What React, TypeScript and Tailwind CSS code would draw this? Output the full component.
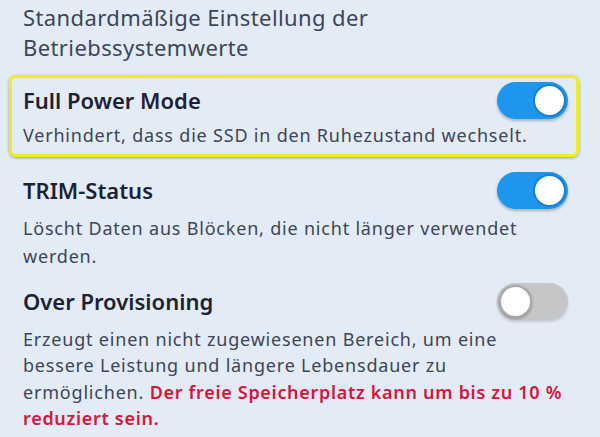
import React from "react";

function Toggle({ on }: { on: boolean }) {
  return on ? (
    <div className="relative w-[71px] h-[37px] rounded-full bg-[#1e96ee] shadow-[0_2px_3px_rgba(0,0,0,0.25)] shrink-0">
      <div className="absolute right-[2px] top-[2px] w-[33px] h-[33px] rounded-full bg-white border-2 border-[#1a7fd0]" />
    </div>
  ) : (
    <div className="relative w-[71px] h-[37px] rounded-full bg-[#c5c6c8] shadow-[0_2px_3px_rgba(0,0,0,0.15)] shrink-0">
      <div className="absolute left-[2px] top-[2px] w-[33px] h-[33px] rounded-full bg-white border-2 border-[#a9aaac] shadow-[0_1px_3px_rgba(0,0,0,0.3)]" />
    </div>
  );
}

export default function App() {
  return (
    <div
      className="w-[600px] h-[437px] overflow-hidden bg-[#e3ebf7] text-[#3d4556]"
      style={{ fontFamily: '"Noto Sans", sans-serif' }}
    >
      <div className="pl-[23px] pt-[2px] text-[22px] leading-[30px] tracking-[0.4px] text-[#3d4556]">
        Standardmäßige Einstellung der
        <br />
        Betriebssystemwerte
      </div>
      <div className="ml-[9px] w-[570px] mt-[13px] h-[82px] rounded-[7px] border-[3px] border-[#f0ed1c] shadow-[0_1px_3px_rgba(0,0,0,0.35)] pl-[11px] pr-[8px] pt-[4px]">
        <div className="flex items-center justify-between">
          <div className="text-[22px] font-semibold text-[#1d2232]">Full Power Mode</div>
          <Toggle on />
        </div>
        <div className="text-[18px] leading-[26px] tracking-[0.8px] mt-[3px] whitespace-nowrap">
          Verhindert, dass die SSD in den Ruhezustand wechselt.
        </div>
      </div>
      <div className="pl-[23px] pr-[32px] pt-[14.5px]">
        <div className="flex items-center justify-between">
          <div className="text-[22px] font-semibold text-[#1d2232]">TRIM-Status</div>
          <Toggle on />
        </div>
        <div className="text-[18px] leading-[28px] tracking-[0.8px] mt-[5.5px]">
          Löscht Daten aus Blöcken, die nicht länger verwendet
          <br />
          werden.
        </div>
      </div>
      <div className="pl-[23px] pr-[32px] pt-[12.5px]">
        <div className="flex items-center justify-between">
          <div className="text-[22px] font-semibold text-[#1d2232]">Over Provisioning</div>
          <Toggle on={false} />
        </div>
        <div className="text-[18px] leading-[26.5px] tracking-[0.8px] mt-[6px] whitespace-nowrap">
          Erzeugt einen nicht zugewiesenen Bereich, um eine
          <br />
          bessere Leistung und längere Lebensdauer zu
          <br />
          ermöglichen.{" "}
          <span className="text-[#dc1439] font-semibold tracking-[0.7px]">
            Der freie Speicherplatz kann um bis zu 10 %
            <br />
            reduziert sein.
          </span>
        </div>
      </div>
    </div>
  );
}
